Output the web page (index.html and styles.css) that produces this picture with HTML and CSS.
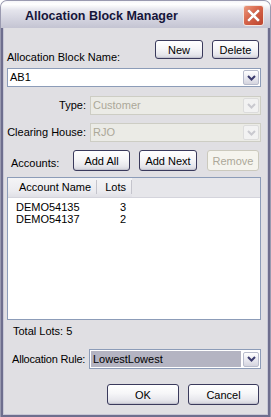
FILE: index.html
```html
<!DOCTYPE html>
<html>
<head>
    <meta charset="utf-8">
    <title>Allocation Block Manager</title>
    <link rel="stylesheet" href="styles.css">
</head>
<body>

<div class="window">
    <div class="titlebar">
        <span class="title">Allocation Block Manager</span>
        <span class="close">
            <svg width="13" height="13" viewBox="0 0 13 13">
                <path d="M2 2 L11 11 M11 2 L2 11" stroke="#ffffff" stroke-width="2.6" stroke-linecap="square" fill="none"/>
            </svg>
        </span>
    </div>
    <div class="frame">
        <div class="client">

            <div class="name-row">
                <span class="name-label">Allocation Block Name:</span>
                <div class="btn-group">
                    <button class="btn btn-new">New</button>
                    <button class="btn btn-delete">Delete</button>
                </div>
            </div>

            <div class="combo combo-name">
                <span class="combo-text">AB1</span>
                <span class="drop">
                    <svg width="9" height="6" viewBox="0 0 9 6"><path d="M1 1 L4.5 4.5 L8 1" stroke="#3c3c6e" stroke-width="2" fill="none"/></svg>
                </span>
            </div>

            <div class="field field-type">
                <span class="field-label">Type:</span>
                <div class="combo disabled">
                    <span class="combo-text">Customer</span>
                    <span class="drop">
                        <svg width="9" height="6" viewBox="0 0 9 6"><path d="M1 1 L4.5 4.5 L8 1" stroke="#c9c9cf" stroke-width="2" fill="none"/></svg>
                    </span>
                </div>
            </div>

            <div class="field field-house">
                <span class="field-label">Clearing House:</span>
                <div class="combo disabled">
                    <span class="combo-text">RJO</span>
                    <span class="drop">
                        <svg width="9" height="6" viewBox="0 0 9 6"><path d="M1 1 L4.5 4.5 L8 1" stroke="#c9c9cf" stroke-width="2" fill="none"/></svg>
                    </span>
                </div>
            </div>

            <div class="accounts-row">
                <span class="accounts-label">Accounts:</span>
                <button class="btn btn-addall">Add All</button>
                <button class="btn btn-addnext">Add Next</button>
                <button class="btn btn-remove" disabled>Remove</button>
            </div>

            <div class="list">
                <div class="list-head">
                    <span class="col col-name">Account Name</span>
                    <span class="col col-lots">Lots</span>
                    <span class="col-rest"></span>
                </div>
                <div class="list-row">
                    <span class="cell-name">DEMO54135</span>
                    <span class="cell-lots">3</span>
                </div>
                <div class="list-row">
                    <span class="cell-name">DEMO54137</span>
                    <span class="cell-lots">2</span>
                </div>
            </div>

            <div class="total">Total Lots: 5</div>

            <div class="field field-rule">
                <span class="field-label">Allocation Rule:</span>
                <div class="combo combo-rule">
                    <span class="combo-text">LowestLowest</span>
                    <span class="drop">
                        <svg width="9" height="6" viewBox="0 0 9 6"><path d="M1 1 L4.5 4.5 L8 1" stroke="#3c3c6e" stroke-width="2" fill="none"/></svg>
                    </span>
                </div>
            </div>

            <div class="footer-btns">
                <button class="btn btn-ok">OK</button>
                <button class="btn btn-cancel">Cancel</button>
            </div>

        </div>
    </div>
</div>

</body>
</html>
```

FILE: styles.css
```css
html, body {
    margin: 0;
    padding: 0;
    background: #ffffff;
}
body {
    font-family: "Liberation Sans", Arial, sans-serif;
    font-size: 11px;
    color: #000000;
}
.window {
    width: 271px;
    height: 417px;
    box-sizing: border-box;
    border: 1px solid #9a9ab0;
    border-bottom: none;
    border-radius: 7px 7px 0 0;
    background: #c6c6d4;
    display: flex;
    flex-direction: column;
    overflow: hidden;
}
.titlebar {
    height: 27px;
    flex: none;
    display: flex;
    align-items: center;
    justify-content: space-between;
    padding: 0 6px 0 24px;
    background: linear-gradient(#f6f6f9 0%, #ffffff 12%, #e4e4ec 35%, #d2d2de 70%, #c4c4d2 100%);
}
.title {
    font-weight: bold;
    font-size: 12.5px;
    color: #15153a;
    margin-top: 2px;
}
.close {
    width: 19px;
    height: 19px;
    border: 1px solid #f2e6e2;
    border-radius: 3px;
    background: linear-gradient(135deg, #ec9a7e 0%, #d6644a 45%, #bc442e 100%);
    display: flex;
    align-items: center;
    justify-content: center;
    margin-top: 1px;
}
.close svg {
    filter: drop-shadow(0 0 0.6px #7a2a1a);
}
.frame {
    flex: 1;
    display: flex;
    border: 2px solid #6e6e8e;
    border-top: none;
    padding: 0 1px 1px;
    background: #c8c8d6;
}
.client {
    flex: 1;
    background: #e0dfe3;
    padding: 0 5px 0 3px;
    display: flex;
    flex-direction: column;
}

/* buttons */
.btn {
    font-family: "Liberation Sans", Arial, sans-serif;
    font-size: 11px;
    color: #000000;
    height: 21px;
    padding: 0;
    border: 1px solid #3a3a5c;
    border-radius: 3px;
    background: linear-gradient(#ffffff 0%, #f6f6f8 45%, #e6e6ec 80%, #d2d2da 100%);
    box-shadow: inset 0 -1px 0 #c4c4d0;
}
.btn:disabled {
    color: #aca899;
    border-color: #cbc9bd;
    background: #f5f4ee;
    box-shadow: none;
}

.name-row {
    margin-top: 12px;
    display: flex;
    justify-content: space-between;
}
.name-label {
    padding-top: 11px;
    line-height: 13px;
}
.btn-group {
    display: flex;
    gap: 9px;
    margin-right: 3px;
}
.btn-new {
    width: 48px;
    height: 19px;
}
.btn-delete {
    width: 47px;
    height: 19px;
}

/* combos */
.combo {
    height: 19px;
    box-sizing: border-box;
    border: 1px solid #8c9cb8;
    background: #ffffff;
    display: flex;
    align-items: center;
    justify-content: space-between;
    margin-right: 1px;
}
.combo-text {
    padding-left: 2px;
    line-height: 13px;
}
.drop {
    width: 16px;
    height: 15px;
    box-sizing: border-box;
    margin-right: 1px;
    border: 1px solid #b8bccc;
    border-radius: 2px;
    background: linear-gradient(#ffffff, #e6e6ee 60%, #d4d4de);
    display: flex;
    align-items: center;
    justify-content: center;
}
.combo-name {
    margin-top: 4px;
}
.combo.disabled {
    border-color: #cdcdc4;
    background: #ebebe6;
    color: #aca899;
}
.combo.disabled .drop {
    border-color: #dcdcdc;
    background: #f2f2f2;
}

.field {
    display: flex;
    align-items: center;
}
.field .combo {
    flex: 1;
}
.field-label {
    width: 79px;
    margin-right: 4px;
    text-align: right;
    line-height: 13px;
    white-space: nowrap;
    box-sizing: border-box;
}
.field-type {
    margin-top: 9px;
}
.field-house {
    margin-top: 8px;
}

.accounts-row {
    margin-top: 8px;
    display: flex;
    align-items: flex-start;
}
.accounts-label {
    width: 62px;
    padding-left: 4px;
    padding-top: 7px;
    line-height: 13px;
}
.btn-addall {
    width: 57px;
}
.btn-addnext {
    width: 58px;
    margin-left: 9px;
}
.btn-remove {
    width: 52px;
    margin-left: 10px;
}

/* list */
.list {
    margin-top: 6px;
    margin-right: 1px;
    height: 143px;
    box-sizing: border-box;
    border: 1px solid #8c9cb8;
    background: #ffffff;
}
.list-head {
    height: 19px;
    display: flex;
    background: linear-gradient(#f4f4f6, #ebebef 70%, #e0e0e6);
    border-bottom: 1px solid #d4d4dc;
}
.col {
    box-sizing: border-box;
    line-height: 18px;
    border-right: 1px solid #c4c4cc;
    height: 14px;
    margin-top: 2px;
    display: flex;
    align-items: center;
}
.col-name {
    width: 89px;
    padding-left: 11px;
}
.col-lots {
    width: 35px;
    justify-content: flex-end;
    padding-right: 5px;
}
.col-rest {
    flex: 1;
    background: #e6e6ea;
}
.list-row {
    display: flex;
    height: 12px;
    line-height: 12px;
}
.list-head + .list-row {
    margin-top: 3px;
}
.cell-name {
    width: 89px;
    padding-left: 8px;
    box-sizing: border-box;
}
.cell-lots {
    width: 29px;
    text-align: right;
}

.total {
    margin-top: 4px;
    padding-left: 6px;
    line-height: 14px;
}

.field-rule {
    margin-top: 11px;
}
.field-rule .field-label {
    text-align: left;
    padding-left: 5px;
    width: 79px;
    letter-spacing: -0.2px;
    margin-right: 3px;
}
.combo-rule {
    height: 20px;
}
.combo-rule .combo-text {
    flex: 1;
    align-self: stretch;
    display: flex;
    align-items: center;
    margin: 1px 2px 1px 1px;
    background: #b4b4c2;
    padding-left: 2px;
}

.footer-btns {
    margin-top: 15px;
    display: flex;
    justify-content: flex-end;
    gap: 9px;
    margin-right: 3px;
}
.btn-ok {
    width: 72px;
}
.btn-cancel {
    width: 71px;
}
```
